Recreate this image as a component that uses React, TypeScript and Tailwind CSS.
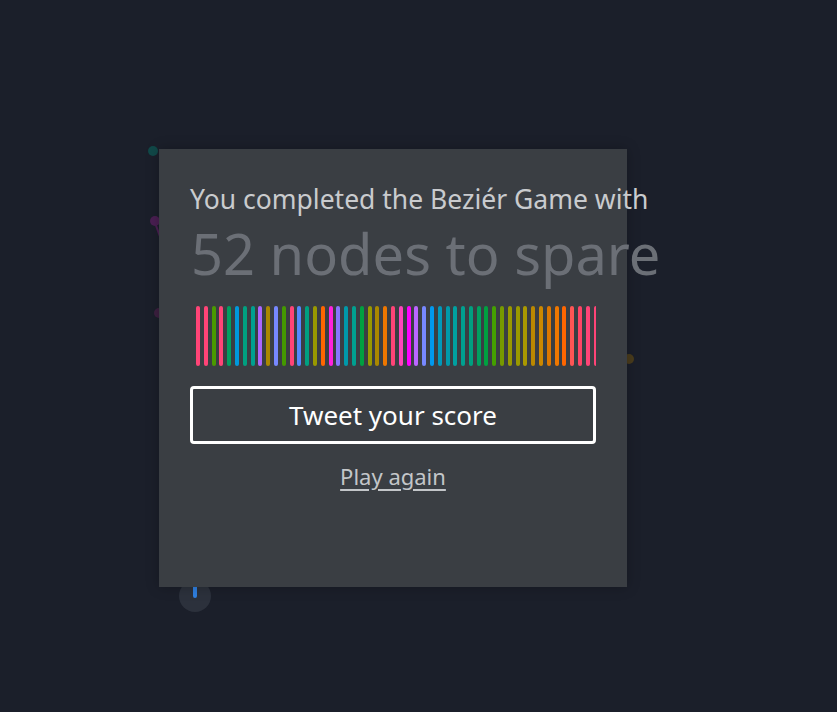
const barColors = [
  "#ff4477", "#ff4477", "#4a9a00", "#ff4477", "#00a060", "#0099dd", "#00a080", "#00a090",
  "#aa66ff", "#aa8800", "#7788ff", "#449900", "#ff4477", "#5588ff", "#00a080", "#999900",
  "#ff6600", "#ff22dd", "#8877ff", "#0099aa", "#00a090", "#00a040", "#999900", "#aa8800",
  "#ee7700", "#ff4477", "#ff44bb", "#ff00ff", "#bb66ff", "#7788ff", "#0099ee", "#0099bb",
  "#0099aa", "#00a0a0", "#00a090", "#00a080", "#00a060", "#00a040", "#44a000", "#779900",
  "#999900", "#999900", "#aa9900", "#bb8800", "#cc8800", "#dd7700", "#ee7700", "#ff6600",
  "#ff5555", "#ff4466", "#ff4477", "#ff4477",
];

const ScoreBars = () => {
  return (
    <div className="flex h-[60px] w-[406px] gap-[3.8px] overflow-hidden pl-[6px]">
      {barColors.map((c, i) => (
        <span key={i} className="h-full w-[4px] shrink-0 rounded-full" style={{ backgroundColor: c }} />
      ))}
    </div>
  );
};

export default function App() {
  return (
    <div
      className="relative h-[712px] w-full overflow-hidden bg-[#1b1f2a]"
      style={{ fontFamily: '"Noto Sans", "Open Sans", sans-serif' }}
    >
      {/* game canvas behind the dialog, dimmed */}
      <span className="absolute left-[148px] top-[146px] h-[10px] w-[10px] rounded-full bg-[#114848]" />
      <span className="absolute left-[150px] top-[216px] h-[10px] w-[10px] rounded-full bg-[#4a1f52]" />
      <span className="absolute left-[157px] top-[224px] h-[14px] w-[2px] rotate-[-20deg] bg-[#4a1f52]" />
      <span className="absolute left-[154px] top-[308px] h-[10px] w-[10px] rounded-full bg-[#3d2040]" />
      <span className="absolute left-[624px] top-[354px] h-[10px] w-[10px] rounded-full bg-[#4a3c1c]" />
      <div className="absolute left-[179px] top-[580px] flex h-[32px] w-[32px] justify-center rounded-full bg-[#2c313c]">
        <span className="h-[18px] w-[4px] rounded-full bg-[#2f7fe0]" />
      </div>

      <div className="relative ml-[159px] mt-[149px] flex h-[438px] w-[468px] flex-col bg-[#3a3e43] pl-[31px] pt-[33px] shadow-[0_0_12px_rgba(0,0,0,0.25)]">
        <p className="text-[26.5px] leading-[34px] whitespace-nowrap text-[#c9cbce]">
          You completed the Beziér Game with
        </p>
        <p className="mt-[5px] ml-[1px] text-[56px] leading-[64px] whitespace-nowrap text-[#6b6f76]">
          52 nodes to spare
        </p>
        <div className="mt-[21px]">
          <ScoreBars />
        </div>
        <button className="mt-[20px] flex h-[58px] w-[406px] items-center justify-center rounded-[4px] border-[3px] border-white text-[26px] text-white">
          Tweet your score
        </button>
        <a className="mt-[16px] w-[406px] text-center text-[22px] text-[#c3c6c9] underline underline-offset-[4px]">
          Play again
        </a>
      </div>
    </div>
  );
}
